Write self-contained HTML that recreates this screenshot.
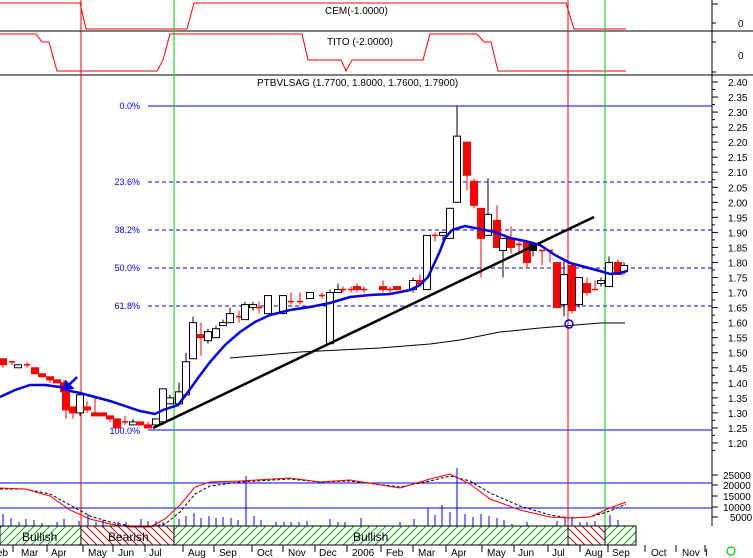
<!DOCTYPE html>
<html><head><meta charset="utf-8"><style>
html,body{margin:0;padding:0;background:#fff;overflow:hidden}
svg{display:block;font-family:"Liberation Sans",Arial,sans-serif}
</style></head><body>
<svg id="s" width="753" height="558" viewBox="0 0 753 558" xmlns="http://www.w3.org/2000/svg">
<defs>
<pattern id="hg" width="8" height="8" patternUnits="userSpaceOnUse"><path d="M-2,10 L10,-2 M-2,2 L2,-2 M6,10 L10,6" stroke="#00c000" stroke-width="1"/></pattern>
<pattern id="hr" width="8" height="8" patternUnits="userSpaceOnUse"><path d="M-2,-2 L10,10 M-2,6 L2,10 M6,-2 L10,2" stroke="#e00000" stroke-width="1"/></pattern>
</defs>
<!-- panel separators -->
<line x1="0" y1="31" x2="753" y2="31" stroke="#000"/>
<line x1="0" y1="75" x2="753" y2="75" stroke="#000"/>
<line x1="712" y1="0" x2="712" y2="526" stroke="#000"/>
<!-- CEM / TITO -->
<polyline fill="none" stroke="#f00" points="0,3 80,3 86,29 187,29 194,3 566,3 574,29 626,29"/>
<polyline fill="none" stroke="#f00" points="0,34 36,34 42,42 49,42 57,71 157,71 163,60 170,34 302,34 308,60 341,60 346,71 352,60 423,60 430,34 477,34 484,42 491,42 498,71 626,71"/>
<text x="325" y="14" font-size="10">CEM(-1.0000)</text>
<text x="327" y="45" font-size="10">TITO (-2.0000)</text>
<text x="257" y="86" font-size="10">PTBVLSAG (1.7700, 1.8000, 1.7600, 1.7900)</text>
<text x="738" y="27" font-size="10">0</text>
<text x="738" y="59" font-size="10">0</text>
<!-- fib lines -->
<g stroke="#0000ff" font-size="9" fill="#0000ff">
<line x1="148" y1="106" x2="712" y2="106"/>
<line x1="148" y1="182" x2="712" y2="182" stroke-dasharray="4,3"/>
<line x1="148" y1="230" x2="712" y2="230" stroke-dasharray="4,3"/>
<line x1="148" y1="268" x2="712" y2="268" stroke-dasharray="4,3"/>
<line x1="148" y1="306" x2="712" y2="306" stroke-dasharray="4,3"/>
<line x1="148" y1="430" x2="712" y2="430"/>
<line x1="0" y1="483" x2="712" y2="483"/>
<line x1="0" y1="508" x2="712" y2="508"/>
</g>
<g font-size="9" fill="#0000ff" stroke="none" text-anchor="end">
<text x="140" y="109">0.0%</text><text x="140" y="185">23.6%</text><text x="140" y="233">38.2%</text>
<text x="140" y="271">50.0%</text><text x="140" y="309">61.8%</text><text x="140" y="434">100.0%</text>
</g>
<!-- vertical lines -->
<line x1="81" y1="0" x2="81" y2="545" stroke="#f00"/>
<line x1="174" y1="0" x2="174" y2="545" stroke="#0c0"/>
<line x1="568" y1="0" x2="568" y2="545" stroke="#f00"/>
<line x1="605" y1="0" x2="605" y2="545" stroke="#0c0"/>
<g id="cd"></g>
<!-- lines -->
<polyline fill="none" stroke="#000" stroke-width="1" points="230,358 300,352 380,348 430,344 460,340 500,332 540,328 600,323 625,323"/>
<line x1="153" y1="428" x2="594" y2="217" stroke="#000" stroke-width="2.5"/>
<polyline fill="none" stroke="#0000e0" stroke-width="2.5" points="0,397 15,390 30,385 45,385 60,387 70,391 80,393 95,397 110,401 125,406 140,411 155,414 163,410 178,405 188,392 198,378 210,362 225,345 240,332 255,322 270,315 290,310 310,307 330,303 350,297 370,295 390,294 410,290 420,285 428,277 435,262 440,251 445,238 452,230 465,226 480,229 495,232 510,238 525,241 540,245 555,255 570,263 585,267 600,271 610,274 620,273 627,271"/>
<!-- arrow -->
<path d="M77,377 L68,386 M64,389 L72,388 L66,382 Z" stroke="#0000e0" stroke-width="2.5" fill="#0000e0"/>
<circle cx="569" cy="324" r="4" fill="none" stroke="#0000e0" stroke-width="1.5"/>
<!-- oscillator -->
<polyline fill="none" stroke="#000" stroke-dasharray="3,2" points="0,489 25,489 50,494 70,505 90,516 110,522 130,526 150,527 165,524 180,512 195,494 210,486 240,482 290,479 320,482 350,481 400,487 430,481 450,476 470,481 490,493 520,506 550,515 570,518 590,517 610,511 626,504"/>
<polyline fill="none" stroke="#f00" points="0,488 25,489 50,496 70,510 90,519 110,524 130,527 150,527 165,519 180,505 195,487 210,482 240,481 290,478 320,482 350,480 400,488 430,479 450,474 470,484 490,499 520,510 550,517 570,518 590,517 610,508 626,502"/>
<g id="vol" stroke="#0000ff"></g>
<!-- state band -->
<rect x="0" y="526" width="81" height="19" fill="url(#hg)" stroke="#000"/>
<rect x="81" y="526" width="93" height="19" fill="url(#hr)" stroke="#000"/>
<rect x="174" y="526" width="394" height="19" fill="url(#hg)" stroke="#000"/>
<rect x="568" y="526" width="37" height="19" fill="url(#hr)" stroke="#000"/>
<rect x="605" y="526" width="31" height="19" fill="url(#hg)" stroke="#000"/>
<g font-size="12"><text x="22" y="541">Bullish</text><text x="108" y="541">Bearish</text><text x="353" y="541">Bullish</text></g>
<g id="ax" font-size="10"></g>
<g id="mo" font-size="10"></g>
<circle cx="731" cy="551" r="4" fill="none" stroke="#0c0" stroke-width="1.2"/>
</svg>
<script>
var NS="http://www.w3.org/2000/svg";
function el(p,t,a,txt){var e=document.createElementNS(NS,t);for(var k in a)e.setAttribute(k,a[k]);if(txt)e.textContent=txt;document.getElementById(p).appendChild(e);}
function Y(p){return 82+(2.40-p)*300.8;}
// x, open, close, high, low
var C=[[3,1.48,1.46,1.48,1.45],[12,1.47,1.47,1.47,1.46],[18,1.45,1.46,1.46,1.45],[27,1.46,1.46,1.47,1.45],[35,1.45,1.43,1.45,1.43],[42,1.43,1.42,1.43,1.42],[50,1.42,1.41,1.42,1.40],[57,1.41,1.40,1.41,1.40],[64,1.40,1.37,1.41,1.36],[66,1.37,1.31,1.37,1.28],[73,1.32,1.30,1.32,1.28],[80,1.30,1.36,1.37,1.29],[87,1.32,1.31,1.34,1.30],[95,1.30,1.29,1.35,1.29],[103,1.30,1.29,1.30,1.29],[110,1.29,1.28,1.29,1.27],[117,1.28,1.25,1.28,1.25],[125,1.27,1.27,1.29,1.26],[133,1.26,1.27,1.28,1.26],[140,1.27,1.26,1.27,1.26],[148,1.26,1.25,1.27,1.25],[156,1.26,1.28,1.28,1.26],[163,1.27,1.38,1.38,1.26],[170,1.33,1.35,1.36,1.33],[179,1.33,1.37,1.40,1.33],[186,1.36,1.47,1.50,1.36],[193,1.48,1.60,1.62,1.48],[201,1.56,1.55,1.60,1.49],[208,1.54,1.57,1.58,1.53],[216,1.55,1.58,1.59,1.55],[223,1.59,1.60,1.61,1.59],[230,1.60,1.63,1.65,1.60],[239,1.62,1.62,1.64,1.60],[245,1.61,1.66,1.67,1.61],[253,1.65,1.66,1.67,1.64],[259,1.65,1.65,1.67,1.63],[268,1.63,1.69,1.69,1.63],[283,1.63,1.69,1.69,1.63],[291,1.67,1.67,1.70,1.66],[300,1.67,1.67,1.70,1.66],[310,1.68,1.70,1.70,1.68],[322,1.69,1.69,1.70,1.68],[330,1.53,1.70,1.71,1.53],[338,1.70,1.71,1.73,1.70],[343,1.71,1.71,1.72,1.70],[351,1.71,1.71,1.72,1.70],[357,1.72,1.71,1.73,1.70],[364,1.71,1.71,1.72,1.70],[383,1.72,1.71,1.74,1.70],[390,1.71,1.71,1.72,1.70],[397,1.72,1.71,1.72,1.71],[413,1.71,1.74,1.75,1.70],[420,1.74,1.73,1.76,1.72],[427,1.71,1.89,1.89,1.71],[435,1.89,1.89,1.90,1.87],[443,1.89,1.90,1.90,1.87],[450,1.88,1.98,1.98,1.88],[457,2.00,2.22,2.32,2.00],[467,2.20,2.09,2.20,2.04],[474,2.07,1.99,2.08,1.98],[481,1.98,1.88,1.98,1.75],[488,1.89,1.96,2.08,1.89],[497,1.94,1.85,1.99,1.85],[503,1.84,1.88,1.88,1.75],[511,1.88,1.85,1.92,1.83],[519,1.86,1.86,1.87,1.83],[527,1.87,1.80,1.87,1.78],[533,1.86,1.84,1.86,1.82,1],[542,1.84,1.84,1.84,1.79],[550,1.84,1.84,1.84,1.80],[557,1.80,1.65,1.80,1.65],[564,1.66,1.76,1.81,1.62],[572,1.79,1.64,1.80,1.63],[579,1.66,1.75,1.75,1.65],[587,1.73,1.70,1.75,1.69],[595,1.71,1.71,1.74,1.71],[601,1.73,1.74,1.75,1.72],[609,1.72,1.80,1.82,1.72],[618,1.80,1.76,1.81,1.76],[624,1.77,1.79,1.80,1.76]];
C.forEach(function(c){var x=c[0],o=c[1],cl=c[2],h=c[3],l=c[4];var up=cl>o,col=(c[5]?"#000":(up?"#000":"#f00"));
var wc=up||c[5]?"#000":"#f00";
el("cd","line",{x1:x,y1:Y(h),x2:x,y2:Y(l),stroke:wc});
var t=Y(Math.max(o,cl)),b=Y(Math.min(o,cl));
if(b-t<1.5){el("cd","line",{x1:x-3,y1:t,x2:x+3,y2:t,stroke:wc,"stroke-width":1.5});}
else el("cd","rect",{x:x-3.5,y:t,width:7,height:b-t,fill:c[5]?"#000":(up?"#fff":"#f00"),stroke:c[5]?"#000":(up?"#000":"#f00")});
});
// axis labels
for(var i=0;i<=24;i++){var p=2.40-i*0.05,y=Y(p);el("ax","line",{x1:712,y1:y,x2:718,y2:y,stroke:"#000"});el("ax","line",{x1:712,y1:y+7.5,x2:715,y2:y+7.5,stroke:"#000"});el("ax","text",{x:728,y:y+4},p.toFixed(2));}
[[25000,475],[20000,485],[15000,496],[10000,507],[5000,517]].forEach(function(v){el("ax","line",{x1:712,y1:v[1],x2:718,y2:v[1],stroke:"#000"});el("ax","text",{x:v[0]==5000?730:723,y:v[1]+4},String(v[0]));});
el("ax","line",{x1:712,y1:4,x2:718,y2:4,stroke:"#000"});el("ax","line",{x1:712,y1:23,x2:716,y2:23,stroke:"#000"});
el("ax","line",{x1:712,y1:42,x2:716,y2:42,stroke:"#000"});el("ax","line",{x1:712,y1:72,x2:716,y2:72,stroke:"#000"});
// volume
var V=[[3,514],[11,518],[19,522],[26,519],[34,520],[42,523],[57,522],[64,519],[79,521],[88,514],[96,522],[103,520],[118,522],[126,522],[141,519],[148,521],[156,521],[163,522],[179,519],[186,516],[194,513],[201,518],[209,516],[216,518],[223,517],[231,518],[238,520],[246,476],[254,516],[261,520],[276,522],[284,522],[291,522],[299,522],[307,521],[330,519],[338,522],[345,522],[361,518],[400,522],[414,519],[428,508],[435,515],[442,505],[450,512],[457,468],[465,514],[473,517],[481,514],[489,516],[497,518],[504,520],[512,524],[527,522],[557,521],[565,518],[572,517],[580,522],[587,522],[595,521],[610,515],[618,520]];
V.forEach(function(v){el("vol","line",{x1:v[0],y1:v[1],x2:v[0],y2:526});});
// months
var M=[["eb",-3],["Mar",21],["Apr",51],["May",88],["Jun",118],["Jul",149],["Aug",188],["Sep",219],["Oct",257],["Nov",288],["Dec",319],["2006",352],["Feb",386],["Mar",418],["Apr",451],["May",487],["Jun",518],["Jul",552],["Aug",585],["Sep",612],["Oct",651],["Nov",682],["I",705]];
M.forEach(function(m){el("mo","text",{x:m[1],y:556},m[0]);});
var T=[13,47,83,113,145,183,214,252,283,315,347,381,413,446,482,514,548,580,608,645,676,705];
T.forEach(function(x){el("mo","line",{x1:x,y1:545,x2:x,y2:552,stroke:"#000"});});
</script>
</body></html>
